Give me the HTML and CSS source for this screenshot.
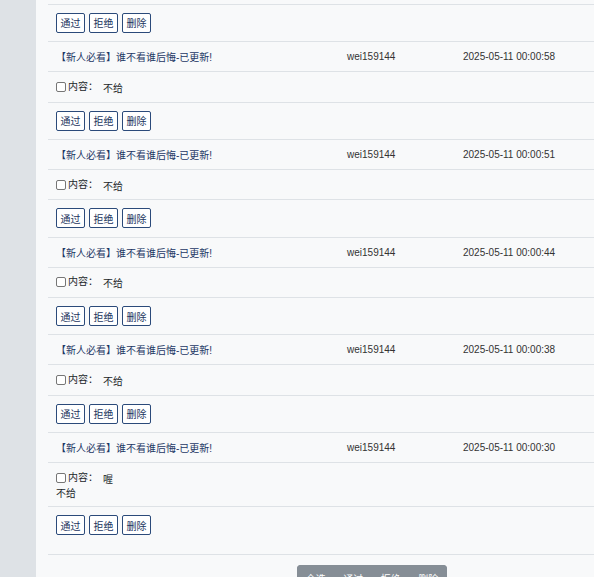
FILE: index.html
```html
<!DOCTYPE html>
<html lang="zh-CN">

<head>
    <meta charset="UTF-8">
    <meta name="viewport" content="width=device-width, initial-scale=1.0">
    <title>审核列表</title>
    <link rel="stylesheet" href="styles.css">
</head>

<body>
    <div class="layout">
        <aside class="sidebar"></aside>
        <main class="main">
            <div class="list">
                <div class="row row-actions row-first">
                    <button class="btn">通过</button><button class="btn">拒绝</button><button class="btn">删除</button>
                </div>

                <div class="row row-title">
                    <span class="col-title">【新人必看】谁不看谁后悔-已更新!</span>
                    <span class="col-user">wei159144</span>
                    <span class="col-time">2025-05-11 00:00:58</span>
                </div>
                <div class="row row-content">
                    <div><label><input type="checkbox" class="check">内容：</label><span class="value">不给</span></div>
                </div>
                <div class="row row-actions">
                    <button class="btn">通过</button><button class="btn">拒绝</button><button class="btn">删除</button>
                </div>

                <div class="row row-title">
                    <span class="col-title">【新人必看】谁不看谁后悔-已更新!</span>
                    <span class="col-user">wei159144</span>
                    <span class="col-time">2025-05-11 00:00:51</span>
                </div>
                <div class="row row-content">
                    <div><label><input type="checkbox" class="check">内容：</label><span class="value">不给</span></div>
                </div>
                <div class="row row-actions">
                    <button class="btn">通过</button><button class="btn">拒绝</button><button class="btn">删除</button>
                </div>

                <div class="row row-title">
                    <span class="col-title">【新人必看】谁不看谁后悔-已更新!</span>
                    <span class="col-user">wei159144</span>
                    <span class="col-time">2025-05-11 00:00:44</span>
                </div>
                <div class="row row-content">
                    <div><label><input type="checkbox" class="check">内容：</label><span class="value">不给</span></div>
                </div>
                <div class="row row-actions">
                    <button class="btn">通过</button><button class="btn">拒绝</button><button class="btn">删除</button>
                </div>

                <div class="row row-title">
                    <span class="col-title">【新人必看】谁不看谁后悔-已更新!</span>
                    <span class="col-user">wei159144</span>
                    <span class="col-time">2025-05-11 00:00:38</span>
                </div>
                <div class="row row-content">
                    <div><label><input type="checkbox" class="check">内容：</label><span class="value">不给</span></div>
                </div>
                <div class="row row-actions">
                    <button class="btn">通过</button><button class="btn">拒绝</button><button class="btn">删除</button>
                </div>

                <div class="row row-title">
                    <span class="col-title">【新人必看】谁不看谁后悔-已更新!</span>
                    <span class="col-user">wei159144</span>
                    <span class="col-time">2025-05-11 00:00:30</span>
                </div>
                <div class="row row-content row-multi">
                    <div><label><input type="checkbox" class="check">内容：</label><span class="value">喔</span><br>不给</div>
                </div>
                <div class="row row-actions row-last">
                    <button class="btn">通过</button><button class="btn">拒绝</button><button class="btn">删除</button>
                </div>
            </div>

            <div class="footer">
                <div class="btn-group">
                    <button class="btn-bar">全选</button><button class="btn-bar">通过</button><button class="btn-bar">拒绝</button><button class="btn-bar">删除</button>
                </div>
            </div>
        </main>
    </div>
</body>

</html>
```

FILE: styles.css
```css
/* Global Reset */
* {
    box-sizing: border-box;
    margin: 0;
    padding: 0;
}

body {
    font-family: "Liberation Sans", "Noto Sans CJK SC", sans-serif;
    font-size: 10px;
    color: #212529;
    background-color: #f8f9fa;
    overflow: hidden;
}

.layout {
    display: flex;
    min-height: 100vh;
}

.sidebar {
    width: 36px;
    flex-shrink: 0;
    background-color: #dee2e6;
}

.main {
    padding: 4px 0 0 12px;
}

.list {
    width: 648px;
    border-top: 1px solid #dee2e6;
}

.row {
    display: flex;
    align-items: center;
    padding-left: 8px;
    border-bottom: 1px solid #dee2e6;
}

.row-actions {
    height: 37.25px;
    gap: 4px;
}

.row-first {
    height: 37px;
    padding-bottom: 1px;
}

.row-last {
    height: 48px;
    align-items: flex-start;
    padding-top: 8px;
}

.row-title {
    height: 30px;
}

.row-content {
    height: 30.5px;
    line-height: 14px;
    padding-top: 2px;
}

.row-multi {
    height: 44px;
}

.col-title {
    width: 291px;
    color: #1d3765;
}

.col-user {
    width: 116px;
    color: #333;
}

.col-time {
    color: #333;
}

label {
    display: inline-flex;
    align-items: center;
}

.check {
    appearance: none;
    width: 10px;
    height: 10px;
    margin-right: 2px;
    border: 1px solid #767676;
    border-radius: 2px;
    background-color: #fff;
}

.value {
    margin-left: 5px;
}

.btn {
    height: 20px;
    padding: 0 3.5px;
    font-family: inherit;
    font-size: 10px;
    color: #1b3560;
    background-color: #fff;
    border: 1px solid #2b4a7a;
    border-radius: 2px;
    cursor: pointer;
}

.footer {
    width: 648px;
    padding-top: 10px;
    display: flex;
    justify-content: center;
}

.btn-group {
    display: flex;
    background-color: #868e96;
    border-radius: 4px 4px 0 0;
    overflow: hidden;
}

.btn-bar {
    width: 37.5px;
    height: 26px;
    padding: 5px 0;
    font-family: inherit;
    font-size: 10px;
    color: #fff;
    background-color: #868e96;
    border: none;
    cursor: pointer;
}
```
